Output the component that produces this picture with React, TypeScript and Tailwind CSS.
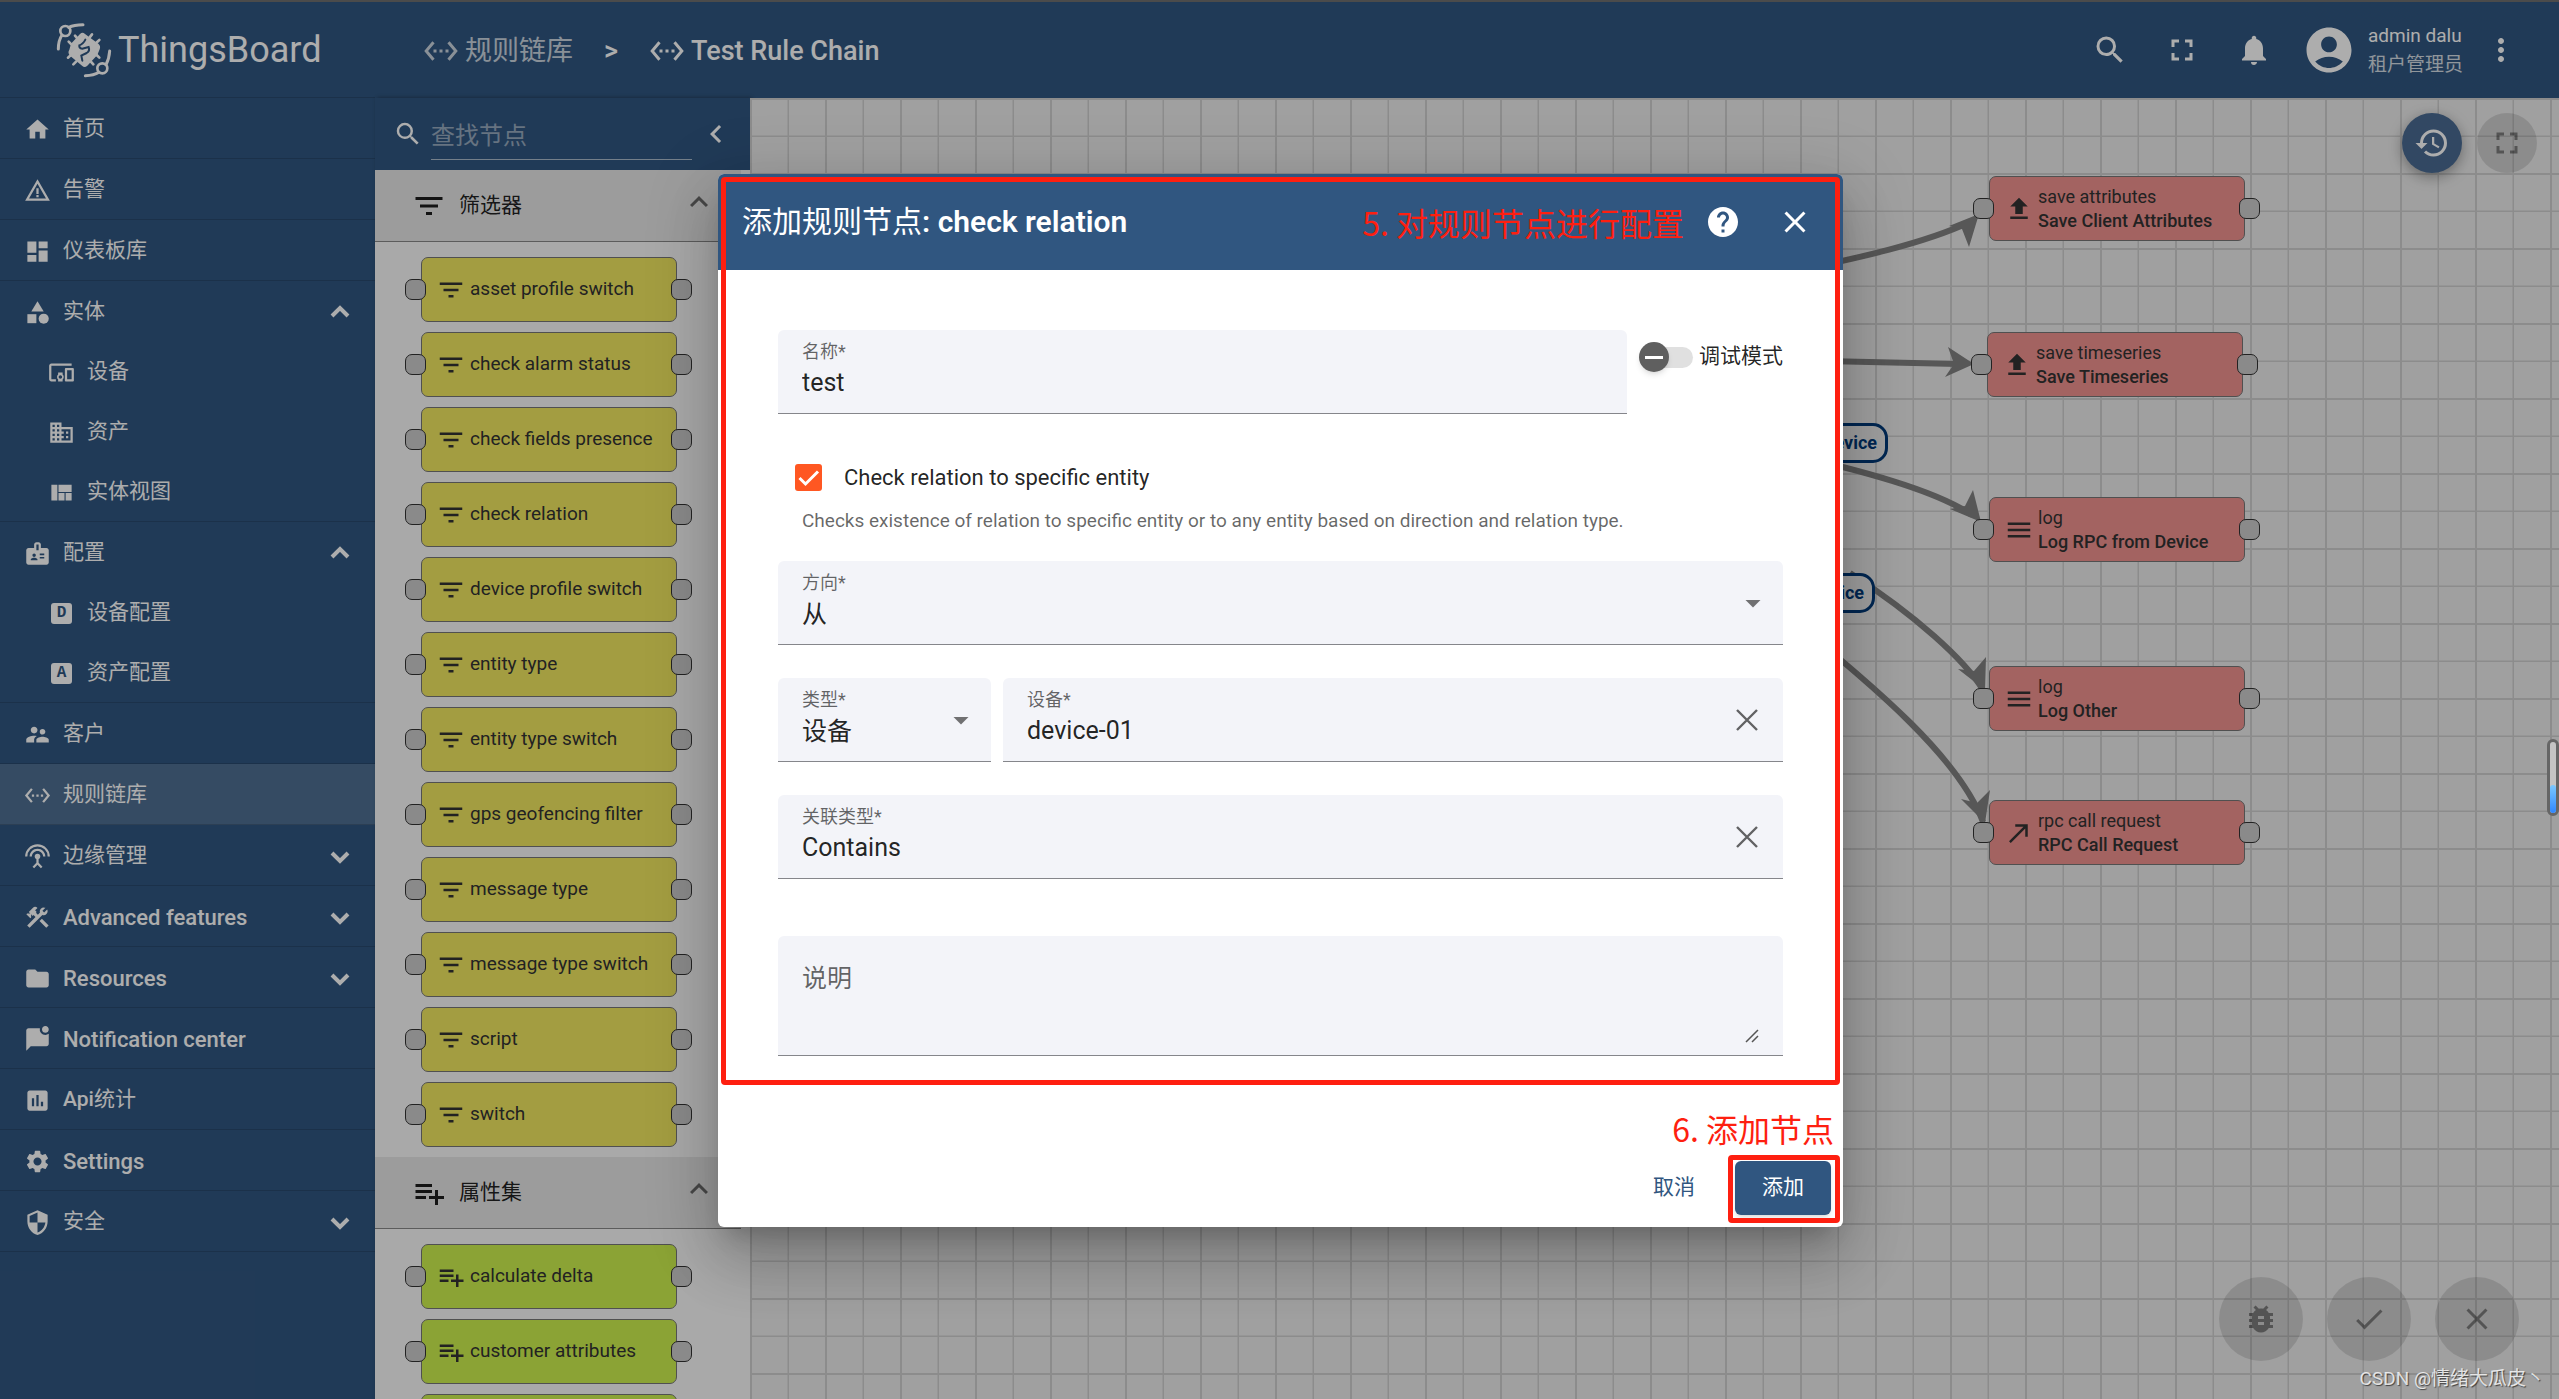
import type { ReactNode } from 'react';
import type { IconType } from 'react-icons';
import {
  MdAccountCircle,
  MdArrowDropDown,
  MdBadge,
  MdBugReport,
  MdCallMade,
  MdCategory,
  MdCheck,
  MdChevronLeft,
  MdClose,
  MdConstruction,
  MdDashboard,
  MdDevicesOther,
  MdDomain,
  MdExpandLess,
  MdFileUpload,
  MdFilterList,
  MdFolder,
  MdFullscreen,
  MdHelp,
  MdHistory,
  MdHome,
  MdInsertChart,
  MdMarkChatUnread,
  MdMenu,
  MdMoreVert,
  MdNotifications,
  MdPlaylistAdd,
  MdSearch,
  MdSecurity,
  MdSettings,
  MdSettingsEthernet,
  MdSettingsInputAntenna,
  MdSupervisorAccount,
  MdViewQuilt,
  MdWarningAmber,
} from 'react-icons/md';

type MenuItem = {
  label: ReactNode;
  icon: ReactNode;
  bold?: boolean;
  active?: boolean;
  open?: boolean;
  children?: { label: string; icon: ReactNode }[];
};

const LetterIcon = ({ letter }: { letter: string }) => (
  <span className="flex size-[27px] items-center justify-center" aria-hidden="true">
    <span className="flex size-[21px] items-center justify-center rounded-[3px] bg-white font-['Liberation_Mono'] text-[16px] leading-none font-bold text-[#305680]">
      {letter}
    </span>
  </span>
);

const menu: MenuItem[] = [
  { label: '首页', icon: <MdHome /> },
  { label: '告警', icon: <MdWarningAmber /> },
  { label: '仪表板库', icon: <MdDashboard /> },
  {
    label: '实体',
    icon: <MdCategory />,
    open: true,
    children: [
      { label: '设备', icon: <MdDevicesOther /> },
      { label: '资产', icon: <MdDomain /> },
      { label: '实体视图', icon: <MdViewQuilt /> },
    ],
  },
  {
    label: '配置',
    icon: <MdBadge />,
    open: true,
    children: [
      { label: '设备配置', icon: <LetterIcon letter="D" /> },
      { label: '资产配置', icon: <LetterIcon letter="A" /> },
    ],
  },
  { label: '客户', icon: <MdSupervisorAccount /> },
  { label: '规则链库', icon: <MdSettingsEthernet />, active: true },
  { label: '边缘管理', icon: <MdSettingsInputAntenna />, open: false },
  { label: 'Advanced features', icon: <MdConstruction />, bold: true, open: false },
  { label: 'Resources', icon: <MdFolder />, bold: true, open: false },
  { label: 'Notification center', icon: <MdMarkChatUnread />, bold: true },
  { label: <><span className="font-medium">Api</span>统计</>, icon: <MdInsertChart /> },
  { label: 'Settings', icon: <MdSettings />, bold: true },
  { label: '安全', icon: <MdSecurity />, open: false },
];

const filterNodes = [
  'asset profile switch',
  'check alarm status',
  'check fields presence',
  'check relation',
  'device profile switch',
  'entity type',
  'entity type switch',
  'gps geofencing filter',
  'message type',
  'message type switch',
  'script',
  'switch',
];

const enrichmentNodes = ['calculate delta', 'customer attributes', ''];

const canvasNodes = [
  { type: 'save attributes', name: 'Save Client Attributes', icon: MdFileUpload, pos: 'left-[1239px] top-[78px]' },
  { type: 'save timeseries', name: 'Save Timeseries', icon: MdFileUpload, pos: 'left-[1237px] top-[234px]' },
  { type: 'log', name: 'Log RPC from Device', icon: MdMenu, pos: 'left-[1239px] top-[399px]' },
  { type: 'log', name: 'Log Other', icon: MdMenu, pos: 'left-[1239px] top-[568px]' },
  { type: 'rpc call request', name: 'RPC Call Request', icon: MdCallMade, pos: 'left-[1239px] top-[702px]' },
];

function Logo() {
  return (
    <svg className="size-[70px]" viewBox="0 0 210 210" fill="none" stroke="#fff" strokeWidth="9" strokeLinecap="round" aria-hidden="true">
      <circle cx="46" cy="48" r="15" strokeWidth="8" />
      <path d="M36 60C28 72 25 86 25 102M56 37C68 31 82 29 99 29" />
      <circle cx="157" cy="160" r="15" strokeWidth="8" />
      <path d="M168 149C175 136 178 124 179 108M147 172C136 179 122 182 106 182" />
      <path
        strokeWidth="8"
        d="M75 62L82 70M56 80L64 88M54 128L62 121M70 148L79 139M126 58L119 67M148 75L139 83M148 128L140 120M130 148L122 139"
      />
      <path d="M101 54L145 86Q153 93 149 103L142 120L112 152Q104 159 97 153L60 122Q52 113 58 104L63 86L90 57Q96 51 101 54Z" fill="#fff" stroke="none" />
      <path d="M106 74C101 84 98 88 88 91C87 97 91 100 97 101L116 96C119 104 117 110 110 114L94 122L97 137" stroke="#305680" strokeWidth="6" />
    </svg>
  );
}

function MenuChevron({ open }: { open: boolean }) {
  return (
    <svg className="size-9" viewBox="0 0 36 36" fill="none" stroke="currentColor" strokeWidth="4" aria-hidden="true">
      <path d={open ? 'M10 22L18 14L26 22' : 'M10 15L18 23L26 15'} />
    </svg>
  );
}

function Sidebar() {
  return (
    <nav className="flex w-[375px] shrink-0 flex-col bg-[#305680] text-[21px] text-white">
      <div className="flex h-24 items-center border-b border-black/15 pl-[50px]">
        <Logo />
        <span className="-ml-0.5 text-4xl">ThingsBoard</span>
      </div>
      {menu.map((item, i) => (
        <div key={i} className={item.active ? 'border-b border-black/15 bg-white/15' : 'border-b border-black/15'}>
          <a href="#" className="flex h-[60px] items-center gap-3 pt-0.5 pr-[17px] pl-6">
            <span className="text-[27px]">{item.icon}</span>
            <span className={item.bold ? 'flex-1 text-[22px] font-medium' : 'flex-1'}>{item.label}</span>
            {item.open !== undefined && <MenuChevron open={item.open} />}
          </a>
          {item.children?.map((child) => (
            <a key={child.label} href="#" className="flex h-[60px] items-center gap-3 pt-0.5 pl-12">
              <span className="text-[27px]">{child.icon}</span>
              {child.label}
            </a>
          ))}
        </div>
      ))}
    </nav>
  );
}

function Header() {
  return (
    <header className="flex h-24 shrink-0 items-center bg-[#305680] pr-10 pl-12 text-white">
      <div className="flex flex-1 items-center pt-0.5 text-[27px]">
        <a href="#" className="flex items-center gap-1.5 opacity-75">
          <MdSettingsEthernet className="size-9" />
          规则链库
        </a>
        <span className="px-[31px] font-medium">&gt;</span>
        <span className="flex items-center gap-1.5 font-medium">
          <MdSettingsEthernet className="size-9" />
          Test Rule Chain
        </span>
      </div>
      <div className="flex items-center">
        <button aria-label="Search" className="mr-9"><MdSearch className="size-9" /></button>
        <button aria-label="Fullscreen" className="mr-9"><MdFullscreen className="size-9" /></button>
        <button aria-label="Notifications" className="mr-[30px]"><MdNotifications className="size-9" /></button>
        <MdAccountCircle className="mr-3 size-[54px]" />
        <div className="mr-5 text-[19px] leading-[29px]">
          <div>admin dalu</div>
          <div className="opacity-80">租户管理员</div>
        </div>
        <button aria-label="More"><MdMoreVert className="size-9" /></button>
      </div>
    </header>
  );
}

function Connectors() {
  return (
    <>
      <span className="absolute top-[21px] -left-[17px] size-[21px] rounded-[7px] border border-[#333] bg-[#ccc]" />
      <span className="absolute top-[21px] -right-4 size-[21px] rounded-[7px] border border-[#333] bg-[#ccc]" />
    </>
  );
}

function PaletteGroup({ title, icon: Icon, nodes, color }: { title: string; icon: IconType; nodes: string[]; color: string }) {
  return (
    <section>
      <button className="flex h-[72px] w-full items-center border-b border-[#888] bg-[#e6e6e6] pr-6 pl-9 text-left text-[21px] text-black/87">
        <Icon className="mr-3 size-9" />
        <span className="flex-1">{title}</span>
        <MdExpandLess className="mb-2 size-9 text-black/54" />
      </button>
      <ul className="flex flex-col gap-2.5 pt-[15px] pr-16 pb-2.5 pl-[46px]">
        {nodes.map((node) => (
          <li key={node} className={`relative flex h-[65px] items-center gap-1 rounded-[7px] border border-[#777] pl-3.5 text-[19px] text-[#333] ${color}`}>
            <Icon className="size-[30px]" />
            {node}
            <Connectors />
          </li>
        ))}
      </ul>
    </section>
  );
}

function Palette() {
  return (
    <aside className="flex w-[375px] shrink-0 flex-col bg-[#f9f9f9] shadow-[2px_0_4px_rgba(0,0,0,0.4)]">
      <div className="flex h-[72px] shrink-0 items-center bg-[#305680] pr-4 pl-[18px] text-white">
        <MdSearch className="size-[30px]" />
        <input
          aria-label="查找节点"
          placeholder="查找节点"
          className="mr-1.5 ml-2 h-[52px] min-w-0 flex-1 border-b border-white/60 pt-1 text-2xl placeholder:text-white/50"
        />
        <button aria-label="Collapse"><MdChevronLeft className="size-9" /></button>
      </div>
      <div className="min-h-0 flex-1 overflow-hidden pr-[9px]">
        <PaletteGroup title="筛选器" icon={MdFilterList} nodes={filterNodes} color="bg-[#f1e861]" />
        <PaletteGroup title="属性集" icon={MdPlaylistAdd} nodes={enrichmentNodes} color="bg-[#cdf04e]" />
      </div>
    </aside>
  );
}

function Canvas() {
  return (
    <main className="relative min-w-0 flex-1 overflow-hidden bg-[#ececec]">
      {/* grid and edges */}
      <svg className="absolute inset-0 size-full" aria-hidden="true">
        <defs>
          <pattern id="grid" width="75" height="75" patternUnits="userSpaceOnUse">
            <path d="M0 0h2v75h-2zM37.5 0h1.5v75h-1.5zM0 0h75v2h-75zM0 37.5h75v1.5h-75z" fill="#000" fillOpacity="0.12" />
          </pattern>
        </defs>
        <rect width="100%" height="100%" fill="url(#grid)" />
        <g transform="translate(-750 -98)" fill="none" stroke="#808080" strokeWidth="6">
          <path d="M1780 274C1860 258 1925 243 1970 222" />
          <path d="M1780 360L1958 364" />
          <path d="M1780 452C1860 470 1935 490 1972 515" />
          <path d="M1850 573C1915 615 1965 660 1983 690" />
          <path d="M1780 610C1880 690 1960 760 1983 822" />
          <g fill="#808080" stroke="none">
            <path d="M1979 214L1949 226L1962 229L1969 247Z" />
            <path d="M1974 364L1948 347L1954 364L1945 377Z" />
            <path d="M1981 522L1973 490L1965 506L1950 509Z" />
            <path d="M1985 690L1986 657L1974 671L1958 669Z" />
            <path d="M1985 823L1990 790L1977 803L1961 799Z" />
          </g>
        </g>
      </svg>

      <div className="absolute top-[325px] left-[880px] flex h-10 w-[258px] items-center justify-end rounded-[15px] border-3 border-[#003a79] bg-[#ececec] pr-2 text-lg font-bold whitespace-nowrap text-[#003a79]">
        RPC Request from Device
      </div>
      <div className="absolute top-[475px] left-[880px] flex h-10 w-[245px] items-center justify-end rounded-[15px] border-3 border-[#003a79] bg-[#ececec] pr-2 text-lg font-bold whitespace-nowrap text-[#003a79]">
        RPC Request to Device
      </div>

      {canvasNodes.map(({ type, name, icon: Icon, pos }) => (
        <div key={name} className={`absolute flex h-[65px] w-64 items-center gap-1 rounded-[7px] border border-[#777] bg-[#f1928f] pl-3.5 text-lg leading-6 text-[#333] ${pos}`}>
          <Icon className="size-[30px]" />
          <div>
            <div>{type}</div>
            <div className="font-medium">{name}</div>
          </div>
          <Connectors />
        </div>
      ))}

      <div className="absolute top-[15px] right-[22px] flex gap-[15px]">
        <button aria-label="Versions" className="flex size-[60px] items-center justify-center rounded-full bg-[#4a6b93] text-white shadow-[0_4px_14px_rgba(0,0,0,0.35)]">
          <MdHistory className="size-9" />
        </button>
        <button aria-label="Fullscreen" className="flex size-[60px] items-center justify-center rounded-full bg-black/12 text-black/40">
          <MdFullscreen className="size-9" />
        </button>
      </div>

      <div className="absolute right-10 bottom-[38px] flex gap-6 text-black/40">
        {[MdBugReport, MdCheck, MdClose].map((Icon, i) => (
          <button key={i} aria-label={['Debug', 'Apply', 'Cancel'][i]} className="flex size-[84px] items-center justify-center rounded-full bg-black/12">
            <Icon className="size-9" />
          </button>
        ))}
      </div>
    </main>
  );
}

function Field({ id, label, className = '', children, action }: { id: string; label: string; className?: string; children: ReactNode; action?: ReactNode }) {
  return (
    <div className={`flex h-[84px] items-center rounded-t-[6px] border-b border-[#85868b] bg-[#f3f4f9] pl-6 ${className}`}>
      <div className="flex min-w-0 flex-1 flex-col pb-1">
        <label htmlFor={id} className="text-lg leading-[26px] text-black/60">{label}*</label>
        {children}
      </div>
      {action}
    </div>
  );
}

const controlClass = 'h-9 w-full appearance-none text-[25px] text-black/87 outline-none';

function ClearButton() {
  return (
    <button aria-label="Clear" className="pr-[18px] text-black/60">
      <svg className="size-9" viewBox="0 0 36 36" stroke="currentColor" strokeWidth="2.4" aria-hidden="true">
        <path d="M8 8L28 28M28 8L8 28" />
      </svg>
    </button>
  );
}

function Dialog() {
  return (
    <div
      role="dialog"
      aria-labelledby="dialog-title"
      className="relative flex w-[1125px] flex-col rounded-md bg-white shadow-[0_16px_22px_-10px_rgba(0,0,0,0.2),0_36px_57px_4px_rgba(0,0,0,0.14),0_14px_69px_12px_rgba(0,0,0,0.12)]"
    >
      <header className="flex h-24 items-center rounded-t-md bg-[#305680] pr-[30px] pl-6 text-white">
        <h2 id="dialog-title" className="flex-1 text-3xl">
          添加规则节点<span className="font-semibold">: check relation</span>
        </h2>
        <button aria-label="Help" className="mr-9"><MdHelp className="size-9" /></button>
        <button aria-label="Close"><MdClose className="size-9" /></button>
      </header>

      <form className="flex flex-col px-[60px] pt-[60px] pb-[93px]" onSubmit={(e) => e.preventDefault()}>
        <div className="flex items-start gap-3">
          <Field id="name" label="名称" className="flex-1">
            <input id="name" defaultValue="test" className={controlClass} />
          </Field>
          <label className="flex h-[54px] items-center gap-1.5 text-[21px] text-black/87">
            <span className="relative flex h-[30px] w-[54px] items-center">
              <input type="checkbox" role="switch" className="ml-1 h-[21px] w-[50px] appearance-none rounded-full bg-[#e0e0e0]" />
              <span className="pointer-events-none absolute left-0 flex size-[30px] items-center justify-center rounded-full bg-[#5f5f5f] shadow-md">
                <span className="h-[3px] w-[18px] bg-white" />
              </span>
            </span>
            调试模式
          </label>
        </div>

        <label className="mt-12 flex h-[30px] items-center gap-[22px] pl-[17px] text-[22px] text-black/87">
          <span className="relative flex size-[27px]">
            <input type="checkbox" defaultChecked className="size-[27px] appearance-none rounded-[3px] bg-[#ff5722]" />
            <svg className="pointer-events-none absolute inset-0 size-[27px]" viewBox="0 0 27 27" fill="none" stroke="#fff" strokeWidth="3" aria-hidden="true">
              <path d="M4.500 14L10.500 20L23 7.500" />
            </svg>
          </span>
          Check relation to specific entity
        </label>
        <p className="mt-4 mb-[27px] pl-6 text-[19px] leading-[26px] text-black/60">
          Checks existence of relation to specific entity or to any entity based on direction and relation type.
        </p>

        <div className="flex flex-col gap-[33px]">
          <Field id="direction" label="方向" className="pr-3" action={<MdArrowDropDown className="size-9 text-black/54" />}>
            <select id="direction" className={controlClass}>
              <option>从</option>
            </select>
          </Field>
          <div className="flex gap-3">
            <Field id="type" label="类型" className="w-[213px] pr-3" action={<MdArrowDropDown className="size-9 text-black/54" />}>
              <select id="type" className={controlClass}>
                <option>设备</option>
              </select>
            </Field>
            <Field id="device" label="设备" className="flex-1" action={<ClearButton />}>
              <input id="device" defaultValue="device-01" className={controlClass} />
            </Field>
          </div>
          <Field id="relation" label="关联类型" action={<ClearButton />}>
            <input id="relation" defaultValue="Contains" className={controlClass} />
          </Field>
        </div>

        <div className="relative mt-[57px] h-[120px] rounded-t-[6px] border-b border-[#85868b] bg-[#f3f4f9] px-6 pt-6">
          <textarea
            aria-label="说明"
            placeholder="说明"
            className="block h-[84px] w-full resize-none text-[25px] leading-[38px] text-black/87 outline-none placeholder:text-black/60"
          />
          <svg className="pointer-events-none absolute right-6 bottom-3 size-3.5" viewBox="0 0 14 14" stroke="#555" strokeWidth="1.5" aria-hidden="true">
            <path d="M1 13L13 1M7 13L13 7" />
          </svg>
        </div>
      </form>

      <footer className="flex items-center justify-end gap-4 p-3 text-[21px]">
        <button className="h-[54px] px-6 text-[#305680]">取消</button>
        <button className="h-[54px] w-24 rounded-md bg-[#305680] text-white shadow-md">添加</button>
      </footer>

      {/* tutorial annotations */}
      <div className="pointer-events-none absolute inset-x-[3px] top-[3px] bottom-[142px] rounded border-5 border-[#fe1f10]" />
      <div className="pointer-events-none absolute top-6 right-[159px] font-['Noto_Sans_CJK_SC',sans-serif] text-[32px] leading-[48px] text-[#fe1f10]">
        5. 对规则节点进行配置
      </div>
      <div className="pointer-events-none absolute right-[9px] bottom-[75px] font-['Noto_Sans_CJK_SC',sans-serif] text-[32px] leading-[48px] text-[#fe1f10]">
        6. 添加节点
      </div>
      <div className="pointer-events-none absolute right-[3px] bottom-1 h-[68px] w-28 rounded border-5 border-[#fe1f10]" />
    </div>
  );
}

export default function App() {
  return (
    <div className="flex h-screen flex-col overflow-hidden bg-[#4b4b4b] pt-0.5 font-[Roboto,'Noto_Sans_CJK_SC',sans-serif]">
      <div className="relative flex min-h-0 flex-1">
        <Sidebar />
        <div className="flex min-w-0 flex-1 flex-col">
          <Header />
          <div className="flex min-h-0 flex-1">
            <Palette />
            <Canvas />
          </div>
        </div>

        <div className="absolute inset-0 flex items-center justify-center bg-black/32 pl-0.5">
          <Dialog />
        </div>

        {/* floating desktop widget at the screen edge */}
        <div className="absolute top-[737px] right-0 flex h-[77px] w-3 flex-col justify-end rounded-full border-3 border-[#666] bg-[#c4c4c4]">
          <div className="h-7 rounded-full bg-linear-to-b from-[#7cc8ff] to-[#2f86ff]" />
        </div>
        <div className="absolute right-3.5 bottom-1.5 text-[19px] text-white/80 [text-shadow:1px_1px_1px_rgba(0,0,0,0.6)]">
          CSDN @情绪大瓜皮丶
        </div>
      </div>
    </div>
  );
}
